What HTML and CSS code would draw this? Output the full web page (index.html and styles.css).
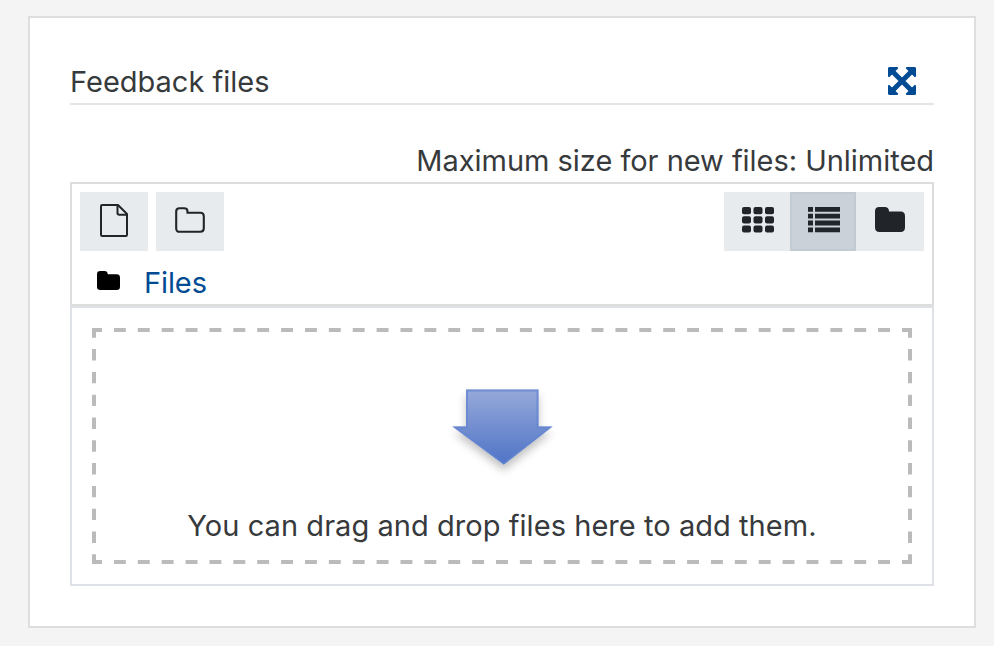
FILE: index.html
```
<!DOCTYPE html>
<html lang="en">
<head>
<meta charset="utf-8">
<title>Feedback files</title>
<link rel="stylesheet" href="styles.css">
</head>
<body>
<main class="card">
  <header class="card-header">
    <h1 class="title"><span>Feedback files</span></h1>
    <a class="expand" aria-label="Expand">
      <svg width="28" height="28" viewBox="0 0 28 28"><path d="M5 5 23 23M23 5 5 23" stroke="currentColor" stroke-width="5"/><path d="M1 0H9.5L10.3 1.2 1.2 10.3 0 9.5V1ZM18.5 0H27L28 1V9.5L26.8 10.3 17.7 1.2ZM0 18.5 1.2 17.7 10.3 26.8 9.5 28H1L0 27ZM28 18.5 26.8 17.7 17.7 26.8 18.5 28H27L28 27Z" fill="currentColor"/></svg>
    </a>
  </header>
  <div class="limit"><span>Maximum size for new files: Unlimited</span></div>
  <section class="navbar">
    <div class="toolbar">
      <div class="actions">
        <button class="btn" aria-label="Add file"><svg width="28" height="33" viewBox="0 0 28 33" fill="none" stroke="currentColor" stroke-width="2" stroke-linejoin="round"><path d="M2.2 1H18L27 10V30.8Q27 32 25.8 32H2.2Q1 32 1 30.8V2.2Q1 1 2.2 1Z"/><path d="M17.5 1V9Q17.5 10.7 19.2 10.7H27"/></svg></button>
        <button class="btn raised" aria-label="Create folder"><svg width="30" height="26" viewBox="0 0 30 26" fill="none" stroke="currentColor" stroke-width="2.1"><path d="M4.5 1.2H9.2Q12.5 1.2 12.5 4.5V5.7H25.3Q28.8 5.7 28.8 9.2V21.3Q28.8 24.8 25.3 24.8H4.7Q1.2 24.8 1.2 21.3V4.5Q1.2 1.2 4.5 1.2Z"/></svg></button>
      </div>
      <div class="views">
        <button class="btn raised view" aria-label="Icons"><svg width="32" height="26" viewBox="0 0 32 26" fill="currentColor"><rect width="9" height="7.2" rx="2"/><rect x="11.5" width="9" height="7.2" rx="2"/><rect x="23" width="9" height="7.2" rx="2"/><rect y="9.2" width="9" height="7.2" rx="2"/><rect x="11.5" y="9.2" width="9" height="7.2" rx="2"/><rect x="23" y="9.2" width="9" height="7.2" rx="2"/><rect y="18.4" width="9" height="7.2" rx="2"/><rect x="11.5" y="18.4" width="9" height="7.2" rx="2"/><rect x="23" y="18.4" width="9" height="7.2" rx="2"/></svg></button>
        <button class="btn raised view active" aria-label="List"><svg width="32" height="26" viewBox="0 0 32 26" fill="currentColor"><path d="M0 0H5V4.8H0ZM7 0H32V4.8H7ZM0 6.8H5V11.6H0ZM7 6.8H32V11.6H7ZM0 13.6H5V18.4H0ZM7 13.6H32V18.4H7ZM0 20.4H5V25.2H0ZM7 20.4H32V25.2H7Z"/></svg></button>
        <button class="btn raised view last" aria-label="Tree"><svg width="30" height="26" viewBox="0 0 30 26" fill="currentColor"><path d="M4.3 0H9.7Q14 0 14 4.5H25.6Q30 4.5 30 9V20.6Q30 25 25.6 25H4.4Q0 25 0 20.6V4.3Q0 0 4.3 0Z"/></svg></button>
      </div>
    </div>
    <nav class="path">
      <svg width="23" height="19" viewBox="0 0 30 25.6" preserveAspectRatio="none"><path d="M4.3 0H9.7Q14 0 14 4.5H25.6Q30 4.5 30 9V21.2Q30 25.6 25.6 25.6H4.4Q0 25.6 0 21.2V4.3Q0 0 4.3 0Z"/></svg>
      <a class="crumb">Files</a>
    </nav>
  </section>
  <section class="container">
    <div class="dropzone">
      <svg class="dashes" width="820" height="236" viewBox="0 0 820 236">
        <g class="dash-x"><path d="M4 2H816"/><path d="M4 234H816"/></g>
        <g class="dash-y"><path d="M2 4V232"/><path d="M818 4V232"/></g>
        <path class="corners" d="M0 0H4V4H0ZM816 0H820V4H816ZM0 232H4V236H0ZM816 232H820V236H816Z"/>
      </svg>
      <svg class="arrow" width="120" height="100" viewBox="0 0 120 100">
        <defs>
          <linearGradient id="fill" x1="0" y1="0" x2="0" y2="1"><stop offset="0" stop-color="#96a9da"/><stop offset="1" stop-color="#4f73c6"/></linearGradient>
          <filter id="shadow" x="-20%" y="-20%" width="140%" height="150%"><feDropShadow dx="0" dy="6" stdDeviation="4" flood-color="#000" flood-opacity=".24"/></filter>
        </defs>
        <path d="M24 9.5H96.5V46.5H110L61.8 84.5 11 46.5H24Z" filter="url(#shadow)" fill="url(#fill)"/>
        <path d="M25 10.5H95.5V47.5H108L61.8 83.5 13 47.5H25Z" fill="none" stroke="#6385d0" stroke-opacity=".7" stroke-width="2"/>
      </svg>
      <p class="hint"><span>You can drag and drop files here to add them.</span></p>
    </div>
  </section>
</main>
</body>
</html>
```

FILE: styles.css
```
* { box-sizing: border-box; }
body {
  margin: 0;
  height: 646px;
  padding: 16px 18px 18px 28px;
  overflow: hidden;
  background: #f4f4f4;
  color: #373a3c;
  font: 29px/36px Inter, "Liberation Sans", sans-serif;
}
.card {
  height: 612px;
  padding: 40px 40px 0;
  border: 2px solid #dedede;
  background: #fff;
}
.card-header {
  display: flex;
  justify-content: space-between;
  height: 47px;
  padding: 5px 18px 0 0;
  border-bottom: 2px solid #e5e5e5;
}
.title { margin: 1px 0 0; font-size: inherit; font-weight: 400; }
.expand { height: 28px; margin-top: 4px; color: #004b93; }
svg { display: block; }
.limit { height: 77px; padding-top: 38px; text-align: right; white-space: nowrap; letter-spacing: -.03px; }
.navbar { height: 124px; padding: 8px; border: 2px solid #ddd; }
.toolbar { display: flex; justify-content: space-between; }
.actions { display: flex; gap: 8px; }
.views { display: flex; }
.btn {
  display: flex;
  align-items: center;
  justify-content: center;
  width: 68px;
  height: 59px;
  padding: 0 0 2px;
  border: 0;
  background: #e7ebee;
  color: #212529;
}
.raised { padding-bottom: 3px; }
.view { width: 66px; padding-left: 2px; }
.last { width: 68px; padding-left: 0; }
.active { background: #cad1d9; box-shadow: inset 0 0 0 2px #c2cad2; }
.path { display: flex; align-items: center; gap: 24px; padding: 14px 0 0 17px; }
.crumb { color: #004b93; letter-spacing: -.1px; }
.path svg { margin-top: -6px; }
.container { height: 280px; padding: 20px; border: 2px solid #dee2e6; }
.dropzone { position: relative; height: 236px; padding-top: 52px; }
.dashes { position: absolute; inset: 0; fill: none; stroke: #bbb; stroke-width: 4; }
.dash-x { stroke-dasharray: 11.941; stroke-dashoffset: 5.971; }
.dash-y { stroke-dasharray: 11.4; stroke-dashoffset: 5.7; }
.corners { fill: #bbb; stroke: none; }
.arrow { margin: 0 auto; }
.hint { margin: 28px 0 0; text-align: center; white-space: nowrap; letter-spacing: .05px; }
```
